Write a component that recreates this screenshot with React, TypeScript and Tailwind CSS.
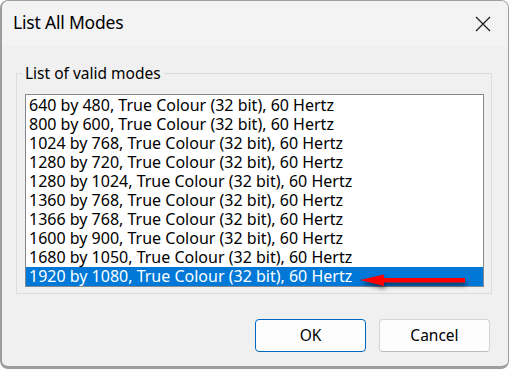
const modes = [
  "640 by 480, True Colour (32 bit), 60 Hertz",
  "800 by 600, True Colour (32 bit), 60 Hertz",
  "1024 by 768, True Colour (32 bit), 60 Hertz",
  "1280 by 720, True Colour (32 bit), 60 Hertz",
  "1280 by 1024, True Colour (32 bit), 60 Hertz",
  "1360 by 768, True Colour (32 bit), 60 Hertz",
  "1366 by 768, True Colour (32 bit), 60 Hertz",
  "1600 by 900, True Colour (32 bit), 60 Hertz",
  "1680 by 1050, True Colour (32 bit), 60 Hertz",
  "1920 by 1080, True Colour (32 bit), 60 Hertz",
];

const selected = 9;

export default function App() {
  return (
    <div
      className="w-[510px] h-[369px] bg-white text-black"
      style={{ fontFamily: '"Segoe UI", "Noto Sans", Arial, sans-serif' }}
    >
      <div className="relative w-[509px] h-[369px] flex flex-col bg-[#f0f0f0] rounded-[8px] border-t border-r border-l-2 border-b-[3px] border-[#9d9d9d] overflow-hidden">
        {/* title bar */}
        <div className="h-[45px] flex items-center justify-between bg-[#f3f3f3] pl-[11px] pr-[16px]">
          <span className="text-[17.5px] leading-none tracking-[-0.2px] -mt-[1px]">List All Modes</span>
          <svg width="16" height="16" viewBox="0 0 16 16" className="mr-[1px]">
            <path d="M1 1 L15 15 M15 1 L1 15" stroke="#1b1b1b" strokeWidth="1.2" />
          </svg>
        </div>

        {/* body */}
        <div className="flex-1 flex flex-col pl-[14px] pr-[16px]">
          <fieldset className="mt-[18px] h-[230px] border border-[#dcdcdc] pl-[8px] pr-[7px] pb-[7px]">
            <legend className="-ml-[3px] px-[3px] text-[15.5px] leading-[18px]">List of valid modes</legend>
            <div className="mt-[12px] border border-[#828790] bg-white pt-px h-[193px]">
              {modes.map((m, i) => (
                <div
                  key={m}
                  className={
                    i === selected
                      ? "h-[19px] pl-[3px] text-[16px] leading-[19px] bg-[#0078d7] text-white"
                      : "h-[19px] pl-[3px] text-[16px] leading-[19px]"
                  }
                >
                  {m}
                </div>
              ))}
            </div>
          </fieldset>

          <div className="mt-[25px] flex justify-end gap-[13px] pr-[2px]">
            <button className="w-[111px] h-[33px] rounded-[4px] border border-[#0067c0] bg-[#fdfdfd] text-[15.5px]">
              OK
            </button>
            <button className="w-[111px] h-[33px] rounded-[4px] border border-[#d4d4d4] border-b-[#bcbcbc] bg-[#fdfdfd] text-[15.5px]">
              Cancel
            </button>
          </div>
        </div>

        {/* red annotation arrow */}
        <svg
          className="absolute left-[356px] top-[270px]"
          width="114"
          height="20"
          viewBox="0 0 114 20"
          style={{ filter: "drop-shadow(1px 3px 2px rgba(0,0,0,0.55))" }}
        >
          <path d="M2 9 L26 3.5 L26 7 L107 7 L107 11.5 L26 11.5 L26 15 Z" fill="#ff0000" />
        </svg>
      </div>
    </div>
  );
}
